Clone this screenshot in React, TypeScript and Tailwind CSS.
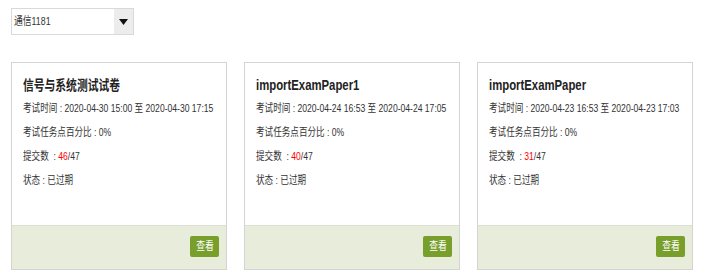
import React from "react";

const cards = [
  { title: "信号与系统测试试卷", time: "2020-04-30 15:00 至 2020-04-30 17:15", done: "46", cjk: true },
  { title: "importExamPaper1", time: "2020-04-24 16:53 至 2020-04-24 17:05", done: "40", cjk: false },
  { title: "importExamPaper", time: "2020-04-23 16:53 至 2020-04-23 17:03", done: "31", cjk: false },
];

export default function App() {
  return (
    <div
      className="w-[706px] h-[278px] bg-white text-[#333] pl-[11px] pt-[8px]"
      style={{ fontFamily: '"Liberation Sans", "Noto Sans CJK SC", sans-serif' }}
    >
      <div className="flex w-[123px] h-[27px] border border-[#d9d9d9] text-[11px]">
        <div className="flex-1 flex items-center pl-[2px] text-[#333]">
          <span className="inline-block whitespace-nowrap scale-x-[0.8] origin-left">通信1181</span>
        </div>
        <div className="w-[19px] bg-[#ececec] flex items-center justify-center">
          <svg width="9" height="6" viewBox="0 0 9 6">
            <path d="M0 0 H9 L4.5 6 Z" fill="#111" />
          </svg>
        </div>
      </div>
      <div className="flex gap-[17px] mt-[27px]">
        {cards.map((c, i) => (
          <div key={i} className="w-[216px] h-[208px] border border-[#d4d4d4] flex flex-col">
            <div className="flex-1 px-[11px] pt-[11px]">
              <div className="h-[22px] leading-[22px] text-[14px] font-bold text-[#222] whitespace-nowrap">
                <span className={c.cjk ? "inline-block scale-x-[0.77] origin-left" : "inline-block scale-x-[0.81] origin-left"}>{c.title}</span>
              </div>
              <div className="text-[11px]">
                <div className="h-[24px] leading-[24px] whitespace-nowrap">
                  <span className="inline-block scale-x-[0.78] origin-left">考试时间 : {c.time}</span>
                </div>
                <div className="h-[24px] leading-[24px] whitespace-nowrap">
                  <span className="inline-block scale-x-[0.78] origin-left">考试任务点百分比 : 0%</span>
                </div>
                <div className="h-[24px] leading-[24px] whitespace-nowrap">
                  <span className="inline-block scale-x-[0.78] origin-left">
                    提交数&nbsp; : <span className="text-[#ff0000]">{c.done}</span>/47
                  </span>
                </div>
                <div className="h-[24px] leading-[24px] whitespace-nowrap">
                  <span className="inline-block scale-x-[0.78] origin-left">状态 : 已过期</span>
                </div>
              </div>
            </div>
            <div className="h-[44px] bg-[#e8eddb] border-t border-[#dcdfd5] flex justify-end items-start pt-[10px] pr-[7px]">
              <div className="w-[29px] h-[21px] rounded-[2px] bg-[#789e2b] text-white text-[11px] flex items-center justify-center">
                <span className="inline-block scale-x-[0.8]">查看</span>
              </div>
            </div>
          </div>
        ))}
      </div>
    </div>
  );
}
